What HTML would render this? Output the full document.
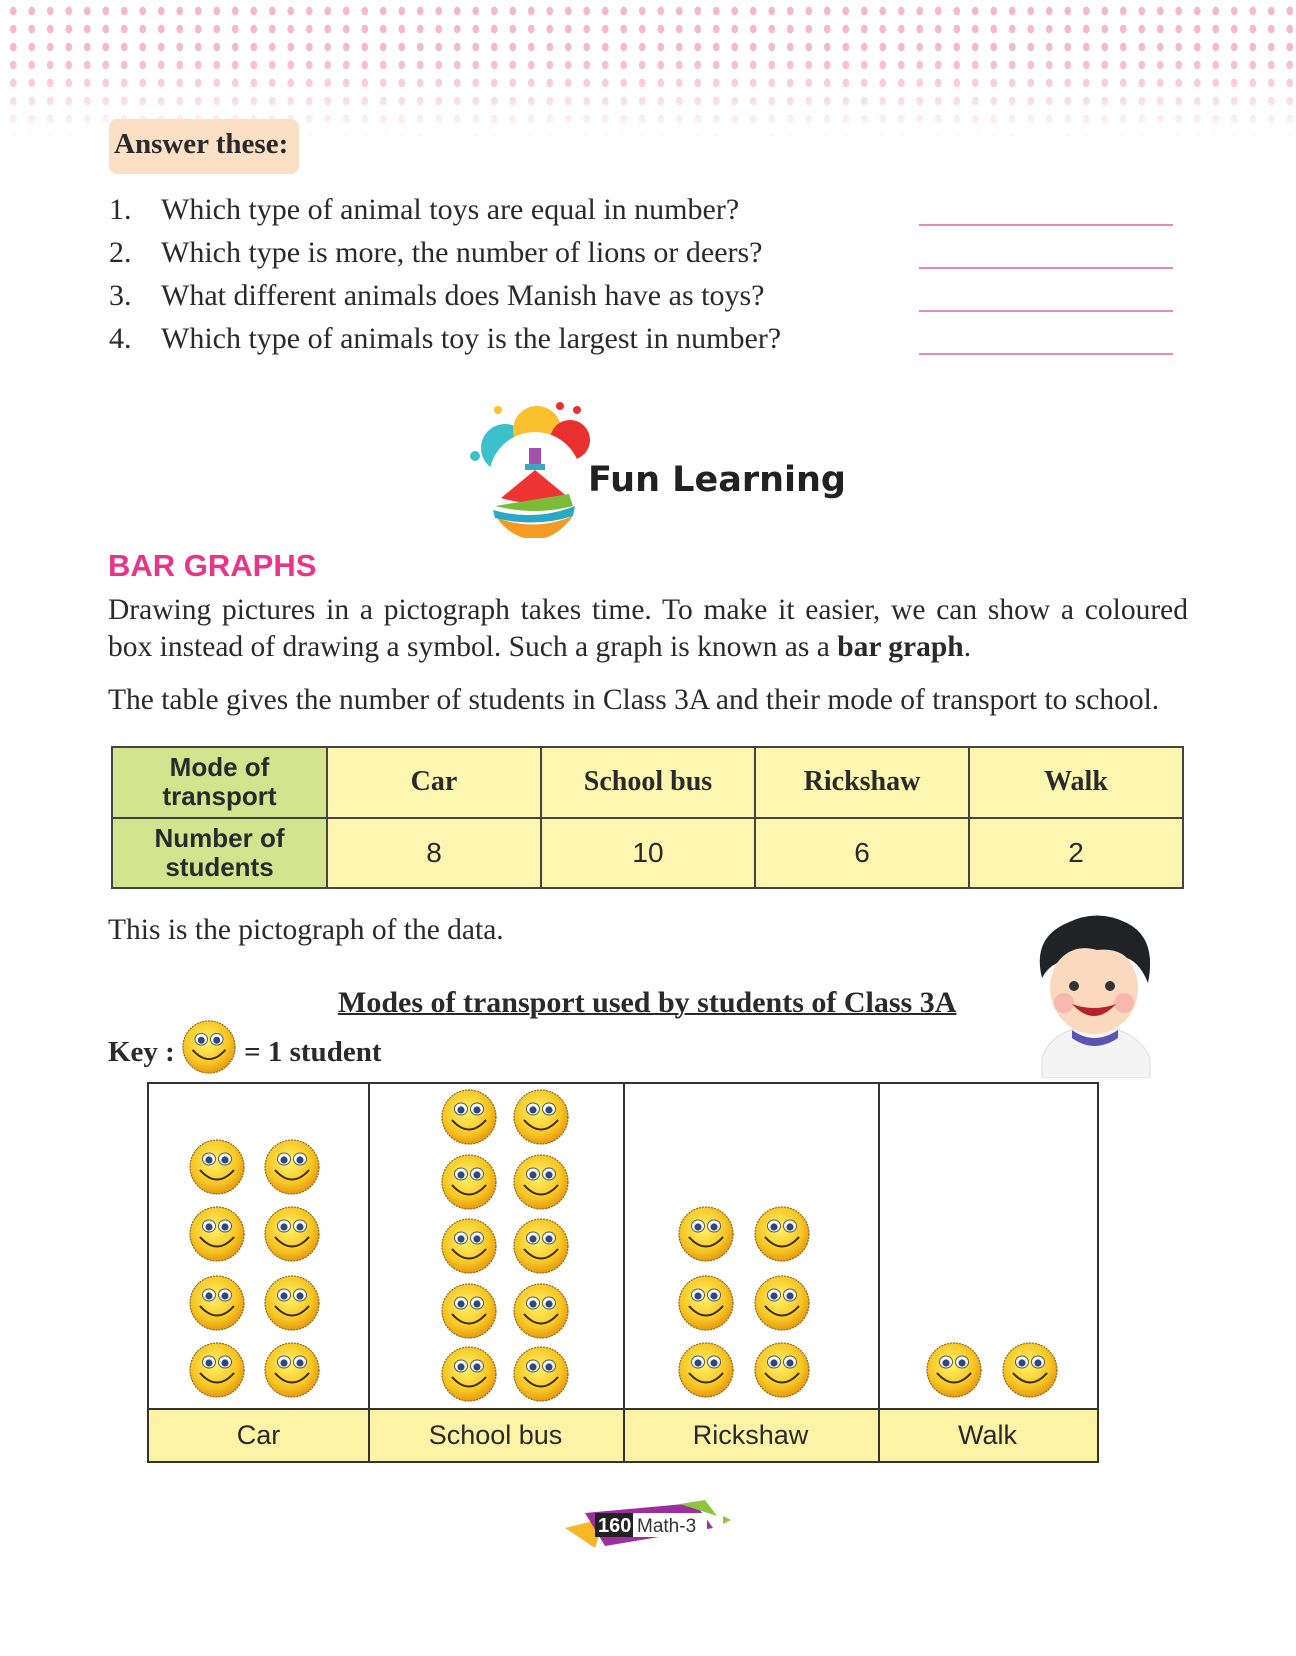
<!DOCTYPE html>
<html><head><meta charset="utf-8"><style>
*{margin:0;padding:0;box-sizing:border-box}
body{width:1296px;height:1656px;background:#fff;position:relative;overflow:hidden;font-family:"Liberation Serif",serif;color:#2a2a2a}
.dots{position:absolute;left:0;top:0;width:1296px;height:140px;background-image:radial-gradient(ellipse 3.5px 4.5px at center,#f5b8d0 90%,transparent 100%);background-size:18.5px 18px;background-position:4px 2px;-webkit-mask-image:linear-gradient(#000 40%,rgba(0,0,0,.25) 85%,transparent);mask-image:linear-gradient(#000 40%,rgba(0,0,0,.25) 85%,transparent)}
.abs{position:absolute;white-space:nowrap}
.ans{left:109px;top:119px;width:190px;height:55px;background:#fce0c6;border-radius:8px;font-weight:bold;font-size:29px;padding:9px 0 0 5px}
.q{font-size:30px;left:109px}
.q span{position:absolute;left:52px}
.line{position:absolute;left:919px;width:254px;border-top:2px solid #e68ab8}
.h{left:108px;top:548px;font-family:"Liberation Sans",sans-serif;font-weight:bold;font-size:31px;color:#e8358a}
.p{position:absolute;left:108px;width:1080px;font-size:29.5px;line-height:37px;text-align:justify;text-align-last:justify}
table{position:absolute;left:111px;top:746px;width:1071px;height:143px;border-collapse:collapse;table-layout:fixed}
td{border:2px solid #444;background:#fdf6b1;text-align:center;font-size:28px}
td.g{background:#d3e38e;font-family:"Liberation Sans",sans-serif;font-weight:bold;font-size:26px;line-height:29px}
td.b{font-weight:bold}
td.n{font-family:"Liberation Sans",sans-serif}
.title{left:338px;top:986px;font-size:30px;font-weight:bold;text-decoration:underline;text-decoration-thickness:2px}
.key{left:108px;top:1036px;font-size:29px;font-weight:bold}
.graph{position:absolute;left:147px;top:1082px;width:952px;height:381px;border:2px solid #333}
.col{position:absolute;top:0;height:100%;border-left:2px solid #333;z-index:2}
.lab{position:absolute;left:0;top:324px;width:948px;height:53px;background:#fdf3a6;border-top:2px solid #333;font-family:"Liberation Sans",sans-serif;font-size:27px}
.lab div{position:absolute;top:10px;text-align:center}
svg.s{position:absolute;width:60px;height:60px}
</style></head><body>
<div class="dots"></div>
<svg width="0" height="0" style="position:absolute"><defs>
<radialGradient id="fg" cx="45%" cy="40%" r="60%"><stop offset="0" stop-color="#fff36a"/><stop offset="0.7" stop-color="#f7c623"/><stop offset="1" stop-color="#e79a12"/></radialGradient>
<symbol id="sm" viewBox="0 0 60 60"><circle cx="30" cy="30" r="27" fill="url(#fg)" stroke="#8a6a1a" stroke-width="1.2" stroke-dasharray="2 1"/><ellipse cx="22" cy="22" rx="6.5" ry="6" fill="#fff" stroke="#555" stroke-width="1"/><ellipse cx="38" cy="22" rx="6.5" ry="6" fill="#fff" stroke="#555" stroke-width="1"/><circle cx="22" cy="23" r="3.6" fill="#2b4a7a"/><circle cx="38" cy="23" r="3.6" fill="#2b4a7a"/><path d="M13 33 Q30 52 47 33" fill="none" stroke="#3a2a10" stroke-width="2"/></symbol>
</defs></svg>

<div class="abs ans">Answer these:</div>
<div class="abs q" style="top:193px">1.<span>Which type of animal toys are equal in number?</span></div>
<div class="abs q" style="top:236px">2.<span>Which type is more, the number of lions or deers?</span></div>
<div class="abs q" style="top:279px">3.<span>What different animals does Manish have as toys?</span></div>
<div class="abs q" style="top:322px">4.<span>Which type of animals toy is the largest in number?</span></div>
<div class="line" style="top:224px"></div><div class="line" style="top:267px"></div><div class="line" style="top:310px"></div><div class="line" style="top:353px"></div>

<svg class="abs" style="left:465px;top:398px" width="140" height="140" viewBox="0 0 140 140">
<circle cx="40" cy="50" r="24" fill="#3cc1cc"/><circle cx="72" cy="32" r="24" fill="#fbc02d"/><circle cx="105" cy="42" r="20" fill="#e8302e"/>
<circle cx="10" cy="58" r="5" fill="#3cc1cc"/><circle cx="33" cy="12" r="4" fill="#fbc02d"/><circle cx="95" cy="8" r="4" fill="#e8302e"/><circle cx="112" cy="12" r="4" fill="#e8302e"/>
<circle cx="70" cy="80" r="46" fill="#fff"/>
<rect x="64" y="50" width="12" height="16" fill="#a34fb0"/><rect x="60" y="66" width="20" height="6" fill="#3aa8c0"/>
<path d="M36 100 L70 72 L104 100 Q70 110 36 100Z" fill="#e33"/><path d="M30 108 L104 96 L108 108 Q70 118 30 108Z" fill="#7cbb3a"/><path d="M28 112 Q70 124 110 108 L108 118 Q70 130 30 120Z" fill="#2aa8c8"/><path d="M32 120 Q70 134 108 118 Q92 140 70 142 Q46 140 32 120Z" fill="#f59a22"/>
</svg>
<div class="abs" style="left:588px;top:460px;font-family:'DejaVu Sans',sans-serif;font-size:35px;font-weight:bold;color:#222">Fun Learning</div>

<div class="abs h">BAR GRAPHS</div>
<div class="p" style="top:592px">Drawing pictures in a pictograph takes time. To make it easier, we can show a coloured</div>
<div class="p" style="top:629px;text-align-last:left">box instead of drawing a symbol. Such a graph is known as a <b>bar graph</b>.</div>
<div class="p" style="top:682px;text-align-last:left">The table gives the number of students in Class 3A and their mode of transport to school.</div>

<table><colgroup><col style="width:215px"><col style="width:214px"><col style="width:214px"><col style="width:214px"><col style="width:214px"></colgroup>
<tr><td class="g">Mode of<br>transport</td><td class="b">Car</td><td class="b">School bus</td><td class="b">Rickshaw</td><td class="b">Walk</td></tr>
<tr><td class="g">Number of<br>students</td><td class="n">8</td><td class="n">10</td><td class="n">6</td><td class="n">2</td></tr></table>

<div class="abs" style="left:108px;top:914px;font-size:29.5px">This is the pictograph of the data.</div>
<div class="abs title">Modes of transport used by students of Class 3A</div>
<div class="abs key">Key : <span style="display:inline-block;width:62px"></span>= 1 student</div>
<svg class="s" style="left:180px;top:1018px;width:58px;height:58px"><use href="#sm"/></svg>

<svg class="abs" style="left:1022px;top:908px" width="145" height="170" viewBox="0 0 145 170">
<path d="M20 150 Q30 120 72 118 Q115 120 128 150 L128 170 L20 170Z" fill="#f4f4f4" stroke="#ddd"/>
<path d="M50 122 Q72 138 96 122 L96 130 Q72 146 50 130Z" fill="#5a55b5"/>
<ellipse cx="72" cy="80" rx="44" ry="46" fill="#fbd9bf"/>
<path d="M20 70 Q10 30 45 15 Q75 0 105 15 Q135 30 126 75 Q118 55 105 50 Q95 40 75 42 Q50 35 35 55 Q25 60 20 70Z" fill="#1f2326"/>
<circle cx="42" cy="95" r="10" fill="#f5a8a8" opacity=".7"/><circle cx="102" cy="95" r="10" fill="#f5a8a8" opacity=".7"/>
<circle cx="52" cy="78" r="5" fill="#333"/><circle cx="88" cy="78" r="5" fill="#333"/>
<path d="M50 96 Q72 120 94 96 Q72 104 50 96Z" fill="#b5222a"/>
</svg>

<div class="graph">
<div class="lab"><div style="left:0;width:219px">Car</div><div style="left:219px;width:255px">School bus</div><div style="left:474px;width:255px">Rickshaw</div><div style="left:729px;width:219px">Walk</div></div>
<div class="col" style="left:219px"></div><div class="col" style="left:474px"></div><div class="col" style="left:729px"></div>
</div>

<svg class="s" style="left:187px;top:1137px"><use href="#sm"/></svg><svg class="s" style="left:262px;top:1137px"><use href="#sm"/></svg>
<svg class="s" style="left:187px;top:1204px"><use href="#sm"/></svg><svg class="s" style="left:262px;top:1204px"><use href="#sm"/></svg>
<svg class="s" style="left:187px;top:1273px"><use href="#sm"/></svg><svg class="s" style="left:262px;top:1273px"><use href="#sm"/></svg>
<svg class="s" style="left:187px;top:1340px"><use href="#sm"/></svg><svg class="s" style="left:262px;top:1340px"><use href="#sm"/></svg>

<svg class="s" style="left:439px;top:1087px"><use href="#sm"/></svg><svg class="s" style="left:511px;top:1087px"><use href="#sm"/></svg>
<svg class="s" style="left:439px;top:1152px"><use href="#sm"/></svg><svg class="s" style="left:511px;top:1152px"><use href="#sm"/></svg>
<svg class="s" style="left:439px;top:1216px"><use href="#sm"/></svg><svg class="s" style="left:511px;top:1216px"><use href="#sm"/></svg>
<svg class="s" style="left:439px;top:1281px"><use href="#sm"/></svg><svg class="s" style="left:511px;top:1281px"><use href="#sm"/></svg>
<svg class="s" style="left:439px;top:1344px"><use href="#sm"/></svg><svg class="s" style="left:511px;top:1344px"><use href="#sm"/></svg>

<svg class="s" style="left:676px;top:1204px"><use href="#sm"/></svg><svg class="s" style="left:752px;top:1204px"><use href="#sm"/></svg>
<svg class="s" style="left:676px;top:1273px"><use href="#sm"/></svg><svg class="s" style="left:752px;top:1273px"><use href="#sm"/></svg>
<svg class="s" style="left:676px;top:1340px"><use href="#sm"/></svg><svg class="s" style="left:752px;top:1340px"><use href="#sm"/></svg>

<svg class="s" style="left:924px;top:1340px"><use href="#sm"/></svg><svg class="s" style="left:1000px;top:1340px"><use href="#sm"/></svg>

<svg class="abs" style="left:565px;top:1498px" width="170" height="56" viewBox="0 0 170 56">
<polygon points="0,30 40,20 30,50" fill="#f6b829"/><polygon points="20,15 130,5 148,30 40,48" fill="#9c2f9c"/><polygon points="115,6 140,2 152,18" fill="#8cc63f"/><polygon points="158,18 166,22 158,26" fill="#8cc63f"/>
<rect x="30" y="15" width="38" height="24" fill="#222"/><rect x="68" y="15" width="74" height="24" fill="#fff"/>
<text x="33" y="34" font-family="Liberation Sans" font-weight="bold" font-size="20" fill="#fff">160</text>
<text x="72" y="34" font-family="Liberation Sans" font-size="19" fill="#333">Math-3</text>
</svg>
</body></html>
